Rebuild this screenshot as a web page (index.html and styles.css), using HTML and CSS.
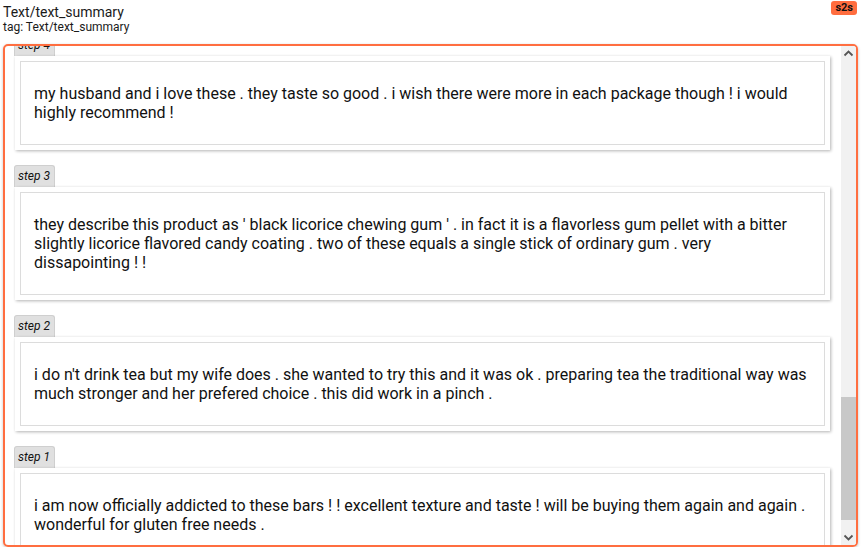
FILE: index.html
```html
<!DOCTYPE html>
<html lang="en">
<head>
<meta charset="utf-8">
<title>Text/text_summary</title>
<link rel="stylesheet" href="styles.css">
</head>
<body>
<header class="header">
  <div class="titles">
    <div class="title">Text/text_summary</div>
    <div class="tag">tag: Text/text_summary</div>
  </div>
  <span class="badge">s2s</span>
</header>
<main class="panel">
  <div class="viewport" id="viewport">
    <div class="list">
      <div class="earlier-steps" aria-hidden="true"></div>
      <section class="step">
        <div class="tab">step 4</div>
        <div class="card"><div class="body">my husband and i love these . they taste so good . i wish there were more in each package though ! i would highly recommend !</div></div>
      </section>
      <section class="step">
        <div class="tab">step 3</div>
        <div class="card"><div class="body">they describe this product as ' black licorice chewing gum ' . in fact it is a flavorless gum pellet with a bitter slightly licorice flavored candy coating . two of these equals a single stick of ordinary gum . very dissapointing ! !</div></div>
      </section>
      <section class="step">
        <div class="tab">step 2</div>
        <div class="card"><div class="body">i do n't drink tea but my wife does . she wanted to try this and it was ok . preparing tea the traditional way was much stronger and her prefered choice . this did work in a pinch .</div></div>
      </section>
      <section class="step">
        <div class="tab">step 1</div>
        <div class="card"><div class="body">i am now officially addicted to these bars ! ! excellent texture and taste ! will be buying them again and again . wonderful for gluten free needs .</div></div>
      </section>
    </div>
  </div>
  <div class="scrollbar" aria-hidden="true">
    <div class="sb-btn">
      <svg width="15" height="15" viewBox="0 0 15 15"><path d="M3.5 9.5 L7.5 5.5 L11.5 9.5" fill="none" stroke="#555" stroke-width="1.8"/></svg>
    </div>
    <div class="sb-track">
      <div class="sb-before"></div>
      <div class="sb-thumb"></div>
    </div>
    <div class="sb-btn">
      <svg width="15" height="15" viewBox="0 0 15 15"><path d="M3.5 5.5 L7.5 9.5 L11.5 5.5" fill="none" stroke="#555" stroke-width="1.8"/></svg>
    </div>
  </div>
</main>
<script src="script.js"></script>
</body>
</html>
```

FILE: styles.css
```css
html, body {
  margin: 0;
  padding: 0;
  background: #ffffff;
}
body {
  padding: 0 3px;
  font-family: Roboto, "Liberation Sans", sans-serif;
  color: #111;
}
.header {
  display: flex;
  justify-content: space-between;
  align-items: flex-start;
  height: 44px;
}
.titles {
  padding-top: 4px;
}
.title {
  font-size: 14px;
  line-height: 16px;
  color: #1a1a1a;
}
.tag {
  font-size: 12px;
  line-height: 14px;
  color: #1a1a1a;
}
.badge {
  margin-top: 1px;
  margin-right: 1px;
  background: #ff6d3f;
  color: #111;
  font-weight: 700;
  font-size: 11px;
  line-height: 14px;
  padding: 0 4px;
  border-radius: 3px;
}
.panel {
  box-sizing: border-box;
  height: 503px;
  border: 2px solid #ff6e40;
  border-radius: 5px;
  display: flex;
  overflow: hidden;
  box-shadow: 0 1px 3px rgba(0, 0, 0, 0.25);
}
.viewport {
  flex: 1;
  overflow: hidden;
}
.scrollbar {
  width: 15px;
  flex: none;
  display: flex;
  flex-direction: column;
  background: #f1f1f1;
}
.sb-btn {
  height: 15px;
  flex: none;
  display: flex;
}
.sb-track {
  flex: 1;
  display: flex;
  flex-direction: column;
}
.sb-before {
  height: 336px;
}
.sb-thumb {
  height: 123px;
  background: #c8c8c8;
}
.list {
  display: flex;
  flex-direction: column;
  gap: 15px;
  padding: 10px 11px 10px 10px;
}
.earlier-steps {
  height: 1326px;
}
.step {
  display: flex;
  flex-direction: column;
  align-items: flex-start;
}
.tab {
  margin-left: -1px;
  box-sizing: border-box;
  height: 22px;
  padding: 0 4px 0 3px;
  background: #e0e0e0;
  border: 1px solid #cfcfcf;
  border-bottom: none;
  border-radius: 3px 3px 0 0;
  font-size: 12px;
  font-style: italic;
  line-height: 21px;
  color: #111;
}
.card {
  align-self: stretch;
  background: #fff;
  padding: 5px;
  box-shadow: 1px 1px 3px rgba(0, 0, 0, 0.3);
}
.body {
  border: 1px solid #dcdcdc;
  padding: 22px 14px 22px 13px;
  font-size: 16px;
  line-height: 19px;
  color: #111;
}
```

FILE: script.js
```js
document.getElementById('viewport').scrollTop = 1363;
```
